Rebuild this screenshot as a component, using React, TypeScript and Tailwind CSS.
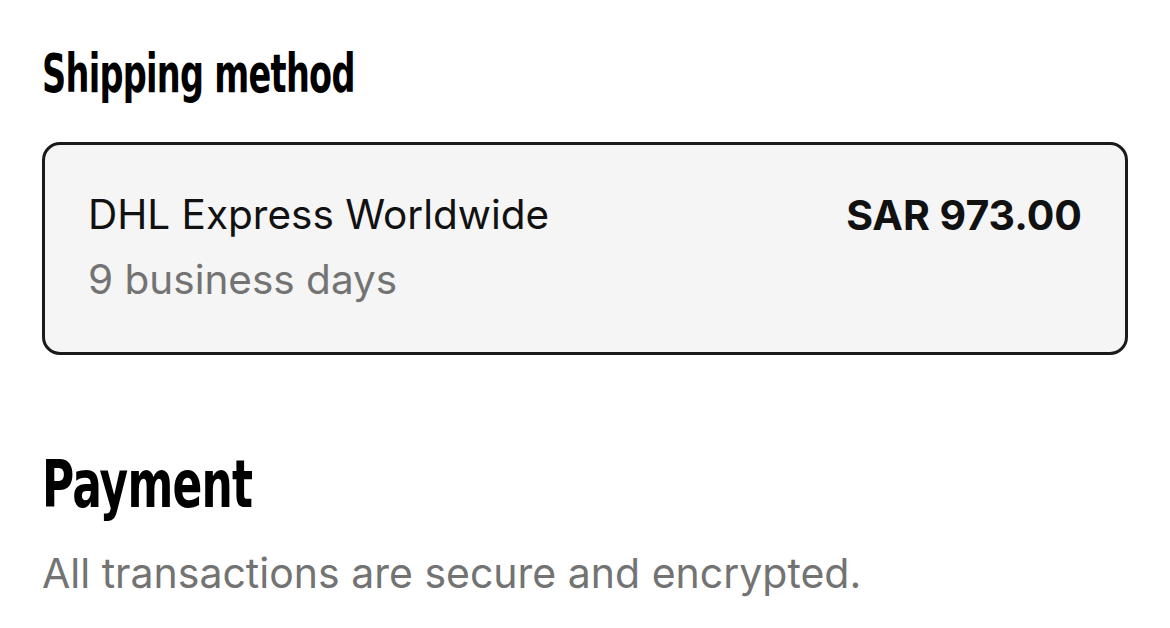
import React from "react";

const heading =
  "inline-block origin-left font-['DejaVu_Sans_Condensed','DejaVu_Sans',sans-serif] font-bold text-black";

const App = () => {
  return (
    <div className="w-[1170px] h-[628px] bg-white px-[42px] pt-[38px] font-['Inter','Noto_Sans',sans-serif]">
      <h2 className="h-[72px] whitespace-nowrap">
        <span className={`${heading} text-[54px] leading-[72px] tracking-[-1px] scale-x-[0.69]`}>Shipping method</span>
      </h2>
      <div className="mt-[32px] flex justify-between rounded-[18px] border-[3px] border-[#1a1a1a] bg-[#f5f5f5] h-[213px] px-[43px] pt-[46px]">
        <div className="flex flex-col">
          <span className="text-[40.5px] leading-[48px] text-[#111]">DHL Express Worldwide</span>
          <span className="mt-[17px] text-[40.5px] leading-[48px] text-[#737373]">9 business days</span>
        </div>
        <span className="text-[41px] leading-[48px] font-bold text-[#111]">SAR 973.00</span>
      </div>
      <h2 className="mt-[90px] h-[80px] whitespace-nowrap">
        <span className={`${heading} text-[66px] leading-[80px] tracking-[-1px] scale-x-[0.74]`}>Payment</span>
      </h2>
      <p className="mt-[24px] text-[41px] leading-[48px] text-[#737373]">All transactions are secure and encrypted.</p>
    </div>
  );
};

export default App;
